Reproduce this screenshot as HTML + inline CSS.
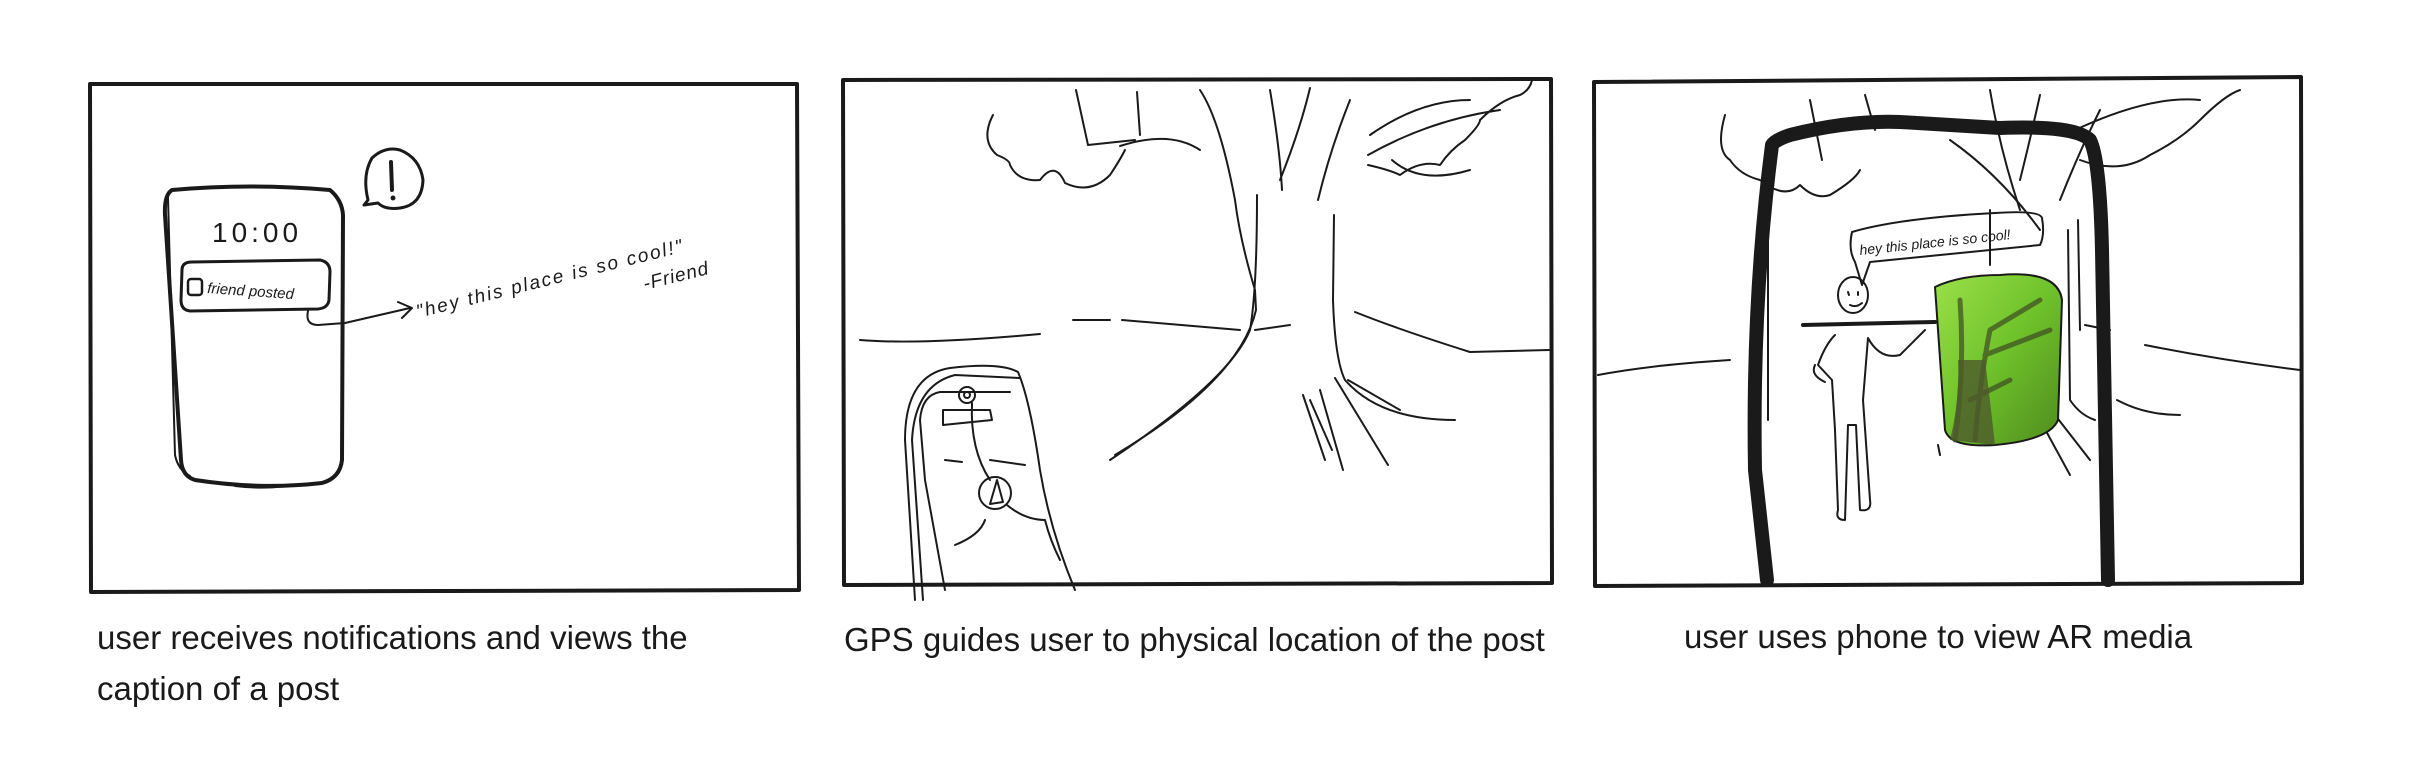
<!DOCTYPE html>
<html><head><meta charset="utf-8"><style>
html,body{margin:0;padding:0;background:#fff;}
body{width:2417px;height:773px;position:relative;overflow:hidden;font-family:"Liberation Sans",Arial,sans-serif;}
.cap{position:absolute;font-size:33px;color:#1a1a1a;line-height:51px;white-space:nowrap;}
svg{position:absolute;left:0;top:0;}
</style></head><body>
<svg width="2417" height="773" viewBox="0 0 2417 773" fill="none" stroke="#1a1a1a" stroke-linecap="round" stroke-linejoin="round">
<defs>
<linearGradient id="g" x1="0" y1="0" x2="1" y2="1">
<stop offset="0" stop-color="#9be04a"/><stop offset="0.5" stop-color="#6fc22a"/><stop offset="1" stop-color="#4e8a1e"/></linearGradient>
<clipPath id="c3"><rect x="1594" y="78" width="708" height="508"/></clipPath>
</defs>
<path d="M90 84 L797 84 L799 590 L91 592 Z" stroke-width="4"/>
<path d="M843 80 L1551 79 L1552 583 L844 585 Z" stroke-width="4"/>
<path d="M1594 82 L2301 77 L2302 583 L1595 586 Z" stroke-width="4"/>

<path d="M172 190 Q250 183 330 190 Q342 200 343 215 L342 460 Q340 478 322 483 Q260 490 195 480 Q182 476 181 460 L165 215 Q164 195 172 190 Z" stroke-width="4"/>
<path d="M168 198 L175 455 Q178 470 190 476" stroke-width="2"/>
<path d="M235 486 Q270 490 300 484" stroke-width="2"/>
<path d="M182 270 Q182 262 192 262 L320 260 Q330 262 330 272 L329 300 Q328 308 318 309 L190 311 Q181 310 181 300 Z" stroke-width="3"/>
<rect x="188" y="279" width="14" height="16" rx="3" stroke-width="2.5"/>
<path d="M308 311 Q305 325 318 325 L345 323 L410 308 M398 302 L412 308 L402 318" stroke-width="2"/>
<path d="M368 200 Q362 175 372 158 Q385 146 400 150 Q420 158 423 180 Q422 205 400 208 Q385 210 378 203 L364 205 Z" stroke-width="3"/>
<path d="M391 162 L392 190" stroke-width="4"/><circle cx="393" cy="198" r="2" fill="#1a1a1a"/>
<g stroke="none" fill="#1a1a1a" font-family="Liberation Sans, sans-serif">
<text x="212" y="242" font-size="28" letter-spacing="4">10:00</text>
<text x="207" y="293" font-size="15" transform="rotate(4 207 293)" font-style="italic">friend posted</text>
<text x="418" y="318" font-size="19" font-style="italic" transform="rotate(-14 418 318)" letter-spacing="2">"hey  this  place  is  so  cool!"</text>
<text x="645" y="290" font-size="19" font-style="italic" transform="rotate(-14 645 290)" letter-spacing="1">-Friend</text>
</g>

<g stroke-width="2">
<path d="M993 115 Q980 140 997 155 Q1010 160 1010 165 Q1018 182 1040 180 Q1055 160 1065 183 Q1090 195 1110 175 Q1120 160 1125 150"/>
<path d="M1076 90 L1088 145 L1135 140 M1137 92 L1140 135 M1120 146 Q1170 130 1200 150"/>
<path d="M1200 90 Q1220 120 1235 200 Q1240 240 1255 290 L1256 310 Q1240 380 1115 455 M1270 90 Q1280 150 1282 190 M1310 88 Q1300 130 1280 180 M1350 100 Q1330 150 1318 200"/>
<path d="M1257 195 Q1257 290 1250 330 Q1230 380 1110 460"/>
<path d="M1334 215 L1333 300 Q1335 360 1345 380 Q1380 420 1455 420"/>
<path d="M1370 135 Q1420 100 1470 100 M1368 155 Q1430 120 1500 110 M1368 165 Q1390 170 1400 175 Q1420 160 1440 165 Q1450 150 1465 140 Q1480 125 1480 120 Q1500 100 1520 95 Q1530 90 1532 80"/>
<path d="M1392 160 Q1420 185 1470 170"/>
<path d="M1303 395 L1325 460 M1320 390 L1343 470 M1335 378 L1388 465 M1348 380 L1400 410 M1310 400 L1332 450"/>
<path d="M1355 312 Q1400 330 1470 352 L1549 350"/>
<path d="M860 340 Q920 345 1040 334 M1073 320 L1110 320 M1122 320 L1240 330 M1290 325 L1255 330"/>
</g>
<g stroke-width="2">
<path d="M915 600 L905 440 Q905 375 950 368 Q1000 362 1018 372 Q1030 400 1040 470 Q1050 530 1075 590"/>
<path d="M923 600 L912 440 Q915 385 955 375 L1020 378"/>
<path d="M945 590 L925 480 L920 420 Q922 395 940 392 L1010 392"/>
<circle cx="967" cy="395" r="8"/><circle cx="967" cy="395" r="3"/>
<path d="M943 410 L990 410 L992 420 L943 425 Z M972 403 Q970 450 990 480"/>
<circle cx="995" cy="493" r="16"/><path d="M990 504 L997 480 L1003 502 Z"/>
<path d="M1007 505 Q1025 520 1045 520 Q1050 540 1060 560 M985 520 Q980 535 955 545 M945 460 L962 462 M990 460 L1025 465"/>
</g>

<g clip-path="url(#c3)" stroke-width="2">
<path d="M1725 115 Q1715 150 1730 160 Q1740 175 1760 180 Q1785 200 1800 185 Q1815 200 1830 195 Q1855 180 1860 170"/>
<path d="M1810 100 L1822 160 M1865 95 L1875 130 M1990 90 Q2000 150 2020 210 M2040 95 Q2030 140 2020 180 M2100 110 Q2080 150 2060 200 M2075 130 Q2150 95 2200 100 M2080 160 Q2120 175 2150 155 Q2180 140 2200 120 Q2225 95 2240 90"/>
<path d="M1950 140 Q2000 175 2040 230"/>
<path d="M1990 210 L1990 265"/>
<path d="M2068 230 L2070 400 Q2080 415 2095 420 M2117 400 Q2145 415 2180 415"/>
<path d="M1598 375 Q1650 365 1730 360 M2085 325 L2110 330 M2145 345 Q2220 360 2300 370"/>
<path d="M1938 445 L1940 455 M2040 420 L2070 475 M2055 415 L2090 460"/>
</g>
<path d="M1767 580 L1755 470 Q1752 300 1772 145 Q1775 140 1790 135 Q1850 120 1900 122 L2000 128 Q2075 125 2090 140 Q2100 160 2102 250 L2108 580" stroke-width="14"/>
<path d="M1852 232 Q1900 218 1995 213 Q2040 210 2042 218 Q2045 235 2040 245 L1870 262 L1862 285 L1855 262 Q1848 250 1852 232 Z" stroke-width="2"/>
<text x="1860" y="255" font-size="14" font-style="italic" fill="#1a1a1a" stroke="none" font-family="Liberation Sans, sans-serif" transform="rotate(-6 1860 255)">hey this place is so cool!</text>
<g stroke-width="2">
<ellipse cx="1853" cy="295" rx="15" ry="18"/>
<path d="M1848 292 L1849 295 M1858 292 L1858 295 M1850 305 Q1856 308 1862 303"/>
<path d="M1803 325 L1935 322" stroke-width="4"/>
<path d="M1835 335 Q1825 345 1818 365 L1832 380 L1835 430 L1838 510 Q1835 520 1845 520 L1848 425 L1856 425 L1860 510 Q1872 512 1870 500 L1863 400 L1868 338 Q1880 360 1900 355 L1925 330"/>
<path d="M1815 365 Q1810 375 1825 382"/>
</g>
<path d="M1935 287 Q1960 275 2000 275 Q2058 270 2062 300 L2058 420 Q2050 440 1995 445 Q1950 448 1945 430 Z" fill="url(#g)" stroke="#1a1a1a" stroke-width="2"/>
<path d="M1955 440 Q1965 370 1960 300 M1975 440 Q1980 380 1990 330 L2040 300 M1985 355 L2050 330 M1970 400 L2010 380" stroke="#3d4a22" stroke-width="5" opacity="0.7"/>
<path d="M1950 440 Q1960 400 1958 360 L1985 360 Q1990 400 1995 445 Z" fill="#4d5a2c" stroke="none" opacity="0.8"/>
<path d="M1768 200 L1768 420 M2078 220 L2080 330" stroke-width="2"/>
</svg>
<div class="cap" style="left:97px;top:612px;">user receives notifications and views the<br>caption of a post</div>
<div class="cap" style="left:844px;top:614px;">GPS guides user to physical location of the post</div>
<div class="cap" style="left:1684px;top:611px;">user uses phone to view AR media</div>
</body></html>
